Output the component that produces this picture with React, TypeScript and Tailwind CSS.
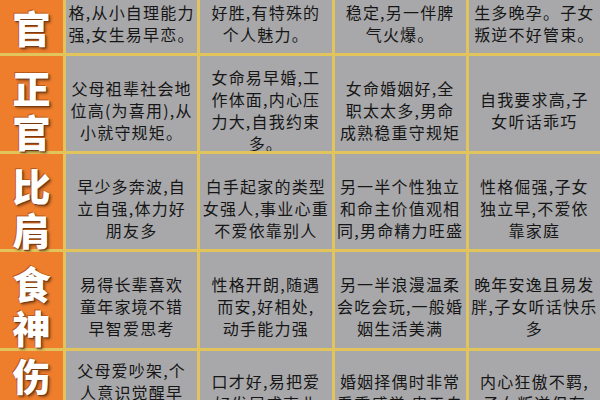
import React from 'react';

interface Row {
  label: string[];
  cells: string[][];
  height: string;
}

const rows: Row[] = [
  {
    label: ['官'],
    height: 'first',
    cells: [
      ['格,从小自理能力', '强,女生易早恋。'],
      ['好胜,有特殊的', '个人魅力。'],
      ['稳定,另一伴脾', '气火爆。'],
      ['生多晚孕。子女', '叛逆不好管束。'],
    ],
  },
  {
    label: ['正', '官'],
    height: 'mid',
    cells: [
      ['父母祖辈社会地', '位高(为喜用),从', '小就守规矩。'],
      ['女命易早婚,工', '作体面,内心压', '力大,自我约束', '多。'],
      ['女命婚姻好,全', '职太太多,男命', '成熟稳重守规矩'],
      ['自我要求高,子', '女听话乖巧'],
    ],
  },
  {
    label: ['比', '肩'],
    height: 'mid',
    cells: [
      ['早少多奔波,自', '立自强,体力好', '朋友多'],
      ['白手起家的类型', '女强人,事业心重', '不爱依靠别人'],
      ['另一半个性独立', '和命主价值观相', '同,男命精力旺盛'],
      ['性格倔强,子女', '独立早,不爱依', '靠家庭'],
    ],
  },
  {
    label: ['食', '神'],
    height: 'mid',
    cells: [
      ['易得长辈喜欢', '童年家境不错', '早智爱思考'],
      ['性格开朗,随遇', '而安,好相处,', '动手能力强'],
      ['另一半浪漫温柔', '会吃会玩,一般婚', '姻生活美满'],
      ['晚年安逸且易发', '胖,子女听话快乐', '多'],
    ],
  },
  {
    label: ['伤'],
    height: 'last',
    cells: [
      ['父母爱吵架,个', '人意识觉醒早', '性格叛逆'],
      ['口才好,易把爱', '好发展成事业', '有才华'],
      ['婚姻择偶时非常', '看重感觉,忠于自', '己的内心'],
      ['内心狂傲不羁,', '子女叛逆但有', '主见'],
    ],
  },
];

const LabelCell: React.FC<{ row: Row }> = ({ row }) => {
  const pos =
    row.height === 'first'
      ? 'justify-center'
      : row.height === 'last'
        ? 'justify-start pt-[2px]'
        : 'justify-center pt-[10px]';
  return (
    <div className={`bg-[#ef7e2c] flex flex-col items-center ${pos}`}>
      {row.label.map((ch, i) => (
        <span
          key={i}
          className="text-[38px] leading-[44px] font-black text-white [text-shadow:1px_1px_0_#7a3a10,-1px_-1px_0_#b85a1c,2px_2px_3px_rgba(0,0,0,0.45)]"
        >
          {ch}
        </span>
      ))}
    </div>
  );
};

const TextCell: React.FC<{ lines: string[]; kind: string; idx: number }> = ({ lines, kind, idx }) => {
  let pos = 'justify-center pt-[12px]';
  if (kind === 'first') pos = 'justify-end pb-[8px]';
  if (kind === 'last') pos = idx === 0 ? 'justify-start pt-[8px]' : 'justify-start pt-[19px]';
  return (
    <div className={`bg-[#a8a8aa] flex flex-col items-center overflow-hidden ${pos}`}>
      {lines.map((l, i) => (
        <span
          key={i}
          className="whitespace-nowrap text-[16px] leading-[22px] tracking-[1.2px] text-[#161616]"
        >
          {l}
        </span>
      ))}
    </div>
  );
};

export default function App() {
  return (
    <div
      className="w-[600px] h-[400px] overflow-hidden bg-[#e2c45c]"
      style={{ fontFamily: '"Noto Sans CJK SC", "Noto Sans", sans-serif' }}
    >
      <div className="grid grid-cols-[63px_1fr_1fr_1fr_1fr] grid-rows-[53px_95px_95px_96px_96px] gap-[3px]">
        {rows.map((row, r) => (
          <React.Fragment key={r}>
            <LabelCell row={row} />
            {row.cells.map((lines, c) => (
              <TextCell key={c} lines={lines} kind={row.height} idx={c} />
            ))}
          </React.Fragment>
        ))}
      </div>
    </div>
  );
}
